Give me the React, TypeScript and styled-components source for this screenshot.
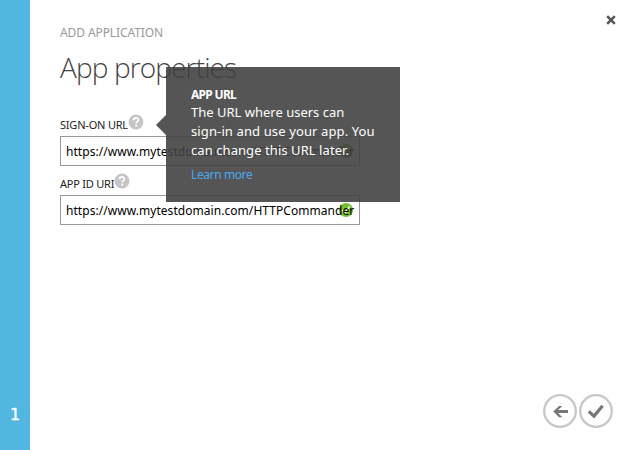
import React from "react";
import styled, { createGlobalStyle } from "styled-components";

const GlobalStyle = createGlobalStyle`
  * { box-sizing: border-box; }
  body { margin: 0; background: #fff; font-family: "Noto Sans", "Open Sans", sans-serif; }
`;
const Dialog = styled.div`
  display: flex;
  width: 630px;
  height: 450px;
  overflow: hidden;
  background: #fff;
`;
const StepRail = styled.aside`
  display: flex;
  flex: 0 0 30px;
  align-items: flex-end;
  justify-content: center;
  padding-bottom: 23px;
  background: #52b6e1;
  color: #fff;
  font: 400 16px/24px "DejaVu Sans", sans-serif;
  -webkit-text-stroke: 0.4px #fff;
`;
const Content = styled.main`
  position: relative;
  display: flex;
  flex: 1;
  flex-direction: column;
  padding: 24px 14px 22px 30px;
`;
const TopBar = styled.header`
  display: flex;
  justify-content: space-between;
  height: 18px;
`;
const Eyebrow = styled.span`
  color: #999;
  font-size: 12px;
  line-height: 18px;
  letter-spacing: -0.1px;
  white-space: nowrap;
`;
const CloseButton = styled.button`
  width: 10px;
  height: 10px;
  margin-top: -9px;
  padding: 0;
  border: 0;
  background: none;
  svg { display: block; }
`;
const Title = styled.h1`
  height: 40px;
  margin: 5px 0 0;
  color: #444;
  font: 300 28px/40px "Open Sans", "Noto Sans", sans-serif;
  letter-spacing: -0.87px;
  white-space: nowrap;
`;
const Form = styled.form`
  display: grid;
  gap: 5px;
  width: 300px;
  margin-top: 25px;
`;
const Field = styled.div`
  display: grid;
  grid-template-rows: 24px 30px;
`;
const Label = styled.label<{ $tracking: number }>`
  display: flex;
  color: #222;
  font-size: 11px;
  line-height: 16px;
  white-space: nowrap;
  span { margin-top: 5px; letter-spacing: ${(p) => p.$tracking}px; }
  svg { margin-top: 2px; }
`;
const ValueBox = styled.div`
  display: grid;
  align-items: center;
  padding: 0 5px;
  border: 1px solid #999;
  color: #000;
  font-size: 12px;
  white-space: nowrap;
  > * { grid-area: 1 / 1; }
`;
const Value = styled.span`
  z-index: 1;
  letter-spacing: 0.05px;
`;
const Valid = styled.svg`
  justify-self: end;
  margin-right: 1px;
`;
const Tooltip = styled.div`
  position: absolute;
  z-index: 2;
  top: 67px;
  left: 136px;
  width: 234px;
  height: 135px;
  padding: 18px 20px 0 25px;
  background: rgba(64, 64, 64, 0.89);
  color: #fff;
  font-size: 13px;
  line-height: 19px;
  &::before {
    position: absolute;
    top: 48px;
    left: -10px;
    border: 10px solid transparent;
    border-right-color: rgba(64, 64, 64, 0.89);
    border-left: 0;
    content: "";
  }
`;
const TipTitle = styled.div`
  height: 18px;
  font-size: 12px;
  font-weight: 700;
  letter-spacing: -0.7px;
`;
const TipLine = styled.div<{ $tracking: number }>`
  letter-spacing: ${(p) => p.$tracking}px;
  white-space: nowrap;
`;
const LearnMore = styled.a`
  display: block;
  margin-top: 5px;
  color: #48a9f2;
  font-size: 12px;
  letter-spacing: -0.4px;
`;
const Actions = styled.footer`
  display: flex;
  gap: 2px;
  justify-content: flex-end;
  margin: auto 3px 0 0;
`;
const RoundButton = styled.button`
  display: block;
  width: 34px;
  height: 34px;
  padding: 0;
  border: 0;
  background: none;
  svg { display: block; }
`;

const HelpIcon = () => (
  <svg width="16" height="16" viewBox="0 0 16 16">
    <circle cx="8" cy="8" r="7.4" fill="#c5c5c5" />
    <path d="M5.5 6.2C5.7 3 10.4 3.2 10.4 5.9C10.4 7.6 8.2 7.6 8.2 9.3" fill="none" stroke="#fff" strokeWidth="1.8" />
    <rect x="7.2" y="10.6" width="2" height="2" fill="#fff" />
  </svg>
);

const fields = [
  { label: "SIGN-ON URL", tracking: -0.2 },
  { label: "APP ID URI", tracking: -0.23 },
];

const tipLines = [
  { text: "The URL where users can", tracking: 0 },
  { text: "sign-in and use your app. You", tracking: 0.12 },
  { text: "can change this URL later.", tracking: 0.07 },
];

export default function App() {
  return (
    <>
      <GlobalStyle />
      <Dialog>
        <StepRail>1</StepRail>
        <Content>
          <TopBar>
            <Eyebrow>ADD APPLICATION</Eyebrow>
            <CloseButton aria-label="Close">
              <svg width="10" height="10" viewBox="0 0 10 10">
                <path d="M1.2 1.2L8.8 8.8M8.8 1.2L1.2 8.8" stroke="#555" strokeWidth="2.5" />
              </svg>
            </CloseButton>
          </TopBar>
          <Title>App properties</Title>
          <Form>
            {fields.map((f) => (
              <Field key={f.label}>
                <Label $tracking={f.tracking}>
                  <span>{f.label}</span>
                  <HelpIcon />
                </Label>
                <ValueBox>
                  <Value>https://www.mytestdomain.com/HTTPCommander</Value>
                  <Valid width="14" height="14" viewBox="0 0 14 14">
                    <circle cx="7" cy="7" r="7" fill="#76c132" />
                    <path d="M3.5 7L6 10L10.5 3.5" fill="none" stroke="#fff" strokeWidth="1.5" />
                  </Valid>
                </ValueBox>
              </Field>
            ))}
          </Form>
          <Actions>
            <RoundButton aria-label="Back">
              <svg width="34" height="34" viewBox="0 0 34 34">
                <circle cx="17" cy="17" r="15.8" fill="none" stroke="#c8c8c8" strokeWidth="2.3" />
                <path d="M10.3 17.6L16 12H19.3L15 16.1H25V19.1H15L19.3 23.2H16Z" fill="#777" />
              </svg>
            </RoundButton>
            <RoundButton aria-label="Complete">
              <svg width="34" height="34" viewBox="0 0 34 34">
                <circle cx="17" cy="17" r="15.8" fill="none" stroke="#c8c8c8" strokeWidth="2.3" />
                <path d="M9.8 17.4L15 22.1L23.6 11.8" fill="none" stroke="#777" strokeWidth="3.2" />
              </svg>
            </RoundButton>
          </Actions>
          <Tooltip role="tooltip">
            <TipTitle>APP URL</TipTitle>
            {tipLines.map((line) => (
              <TipLine key={line.text} $tracking={line.tracking}>{line.text}</TipLine>
            ))}
            <LearnMore>Learn more</LearnMore>
          </Tooltip>
        </Content>
      </Dialog>
    </>
  );
}
